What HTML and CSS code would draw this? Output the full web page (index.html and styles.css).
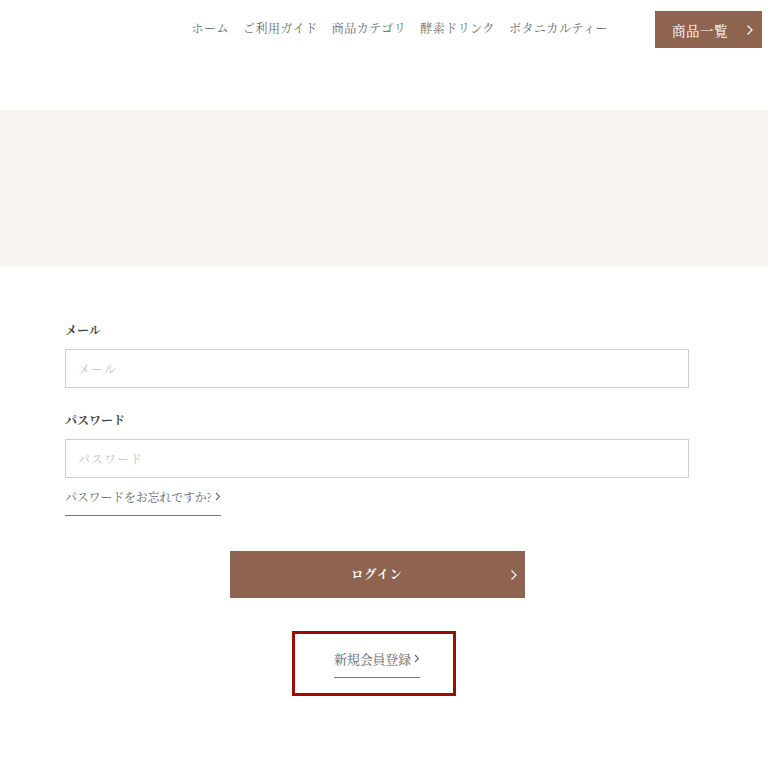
FILE: index.html
```html
<!DOCTYPE html>
<html lang="ja">
<head>
<meta charset="utf-8">
<title>ログイン</title>
<link rel="stylesheet" href="styles.css">
</head>
<body>
<header class="header">
  <nav class="nav">
    <a href="#">ホーム</a>
    <a href="#">ご利用ガイド</a>
    <a href="#">商品カテゴリ</a>
    <a href="#">酵素ドリンク</a>
    <a href="#">ボタニカルティー</a>
  </nav>
  <a class="btn-list" href="#"><span>商品一覧</span><svg class="chev" width="8" height="12" viewBox="0 0 8 12"><path d="M1.5 1.5 L6 6 L1.5 10.5" fill="none" stroke="currentColor" stroke-width="1.2"/></svg></a>
</header>
<div class="banner"></div>
<main class="form">
  <label class="label">メール</label>
  <div class="input"><span class="ph">メール</span></div>
  <label class="label label-pw">パスワード</label>
  <div class="input"><span class="ph">パスワード</span></div>
  <a class="forgot" href="#">パスワードをお忘れですか? <svg width="6" height="9" viewBox="0 0 6 9"><path d="M1 1 L4.5 4.5 L1 8" fill="none" stroke="currentColor" stroke-width="1.1"/></svg></a>
  <div class="login-wrap">
    <a class="btn-login" href="#"><span>ログイン</span><svg class="chev2" width="8" height="12" viewBox="0 0 8 12"><path d="M1.5 1.5 L6 6 L1.5 10.5" fill="none" stroke="currentColor" stroke-width="1.2"/></svg></a>
  </div>
  <div class="reg-wrap">
    <div class="reg-box">
      <a class="reg" href="#">新規会員登録 <svg width="6" height="9" viewBox="0 0 6 9"><path d="M1 1 L4.5 4.5 L1 8" fill="none" stroke="currentColor" stroke-width="1.1"/></svg></a>
    </div>
  </div>
</main>
</body>
</html>
```
FILE: styles.css
```css
* { box-sizing: border-box; }
html, body { margin: 0; padding: 0; background: #fff; }
body {
  font-family: "Noto Serif CJK JP", "Liberation Serif", "Noto Sans CJK JP", serif;
  color: #555;
  width: 768px;
}
a { text-decoration: none; color: inherit; }
.header {
  height: 110px;
  display: flex;
  align-items: flex-start;
  justify-content: flex-end;
  padding: 11px 6px 0 0;
}
.nav {
  display: flex;
  gap: 14px;
  font-size: 12px;
  color: #6a6a6a;
  letter-spacing: 0.5px;
  margin-top: 8px;
  margin-right: 47px;
}
.btn-list {
  width: 107px;
  height: 37px;
  background: #8e6450;
  color: #fff;
  display: flex;
  align-items: center;
  justify-content: space-between;
  padding: 0 8px 0 17px;
  font-size: 13.5px;
  letter-spacing: 0.5px;
}
.banner {
  height: 157px;
  background: #f8f5f0;
}
.form {
  padding: 56px 79px 0 65px;
}
.label {
  display: block;
  font-size: 12px;
  font-weight: bold;
  color: #444;
  height: 24px;
  line-height: 14px;
  margin-bottom: 2px;
}
.label-pw { margin-top: 25px; }
.input {
  width: 624px;
  height: 39px;
  border: 1px solid #cfcfcf;
  display: flex;
  align-items: center;
  padding-left: 12px;
  font-size: 12px;
  color: #c4c4c4;
  letter-spacing: 1px;
}
.forgot {
  display: inline-flex;
  align-items: center;
  gap: 3px;
  margin-top: 9px;
  white-space: nowrap;
  height: 29px;
  padding: 0 0 10px 0;
  border-bottom: 1px solid #777;
  font-size: 12px;
  letter-spacing: -0.2px;
  color: #666;
}
.login-wrap {
  display: flex;
  justify-content: center;
  margin-top: 35px;
}
.btn-login {
  width: 295px;
  height: 47px;
  background: #8e6450;
  color: #fff;
  display: flex;
  align-items: center;
  justify-content: center;
  position: relative;
  font-size: 12px;
  font-weight: bold;
  letter-spacing: 1px;
  padding-bottom: 2px;
}
.chev2 { position: absolute; right: 7px; top: 18px; }
.reg-wrap {
  display: flex;
  justify-content: center;
  margin-top: 33px;
  padding-right: 6px;
}
.reg-box {
  width: 164px;
  height: 65px;
  border: 3px solid #9c0a0a;
  display: flex;
  justify-content: center;
  padding: 15px 0 0 6px;
}
.reg {
  display: inline-flex;
  align-items: center;
  gap: 3px;
  height: 29px;
  padding-bottom: 9px;
  border-bottom: 1px solid #777;
  font-size: 13px;
  letter-spacing: -0.2px;
  color: #666;
  align-self: flex-start;
}
```
